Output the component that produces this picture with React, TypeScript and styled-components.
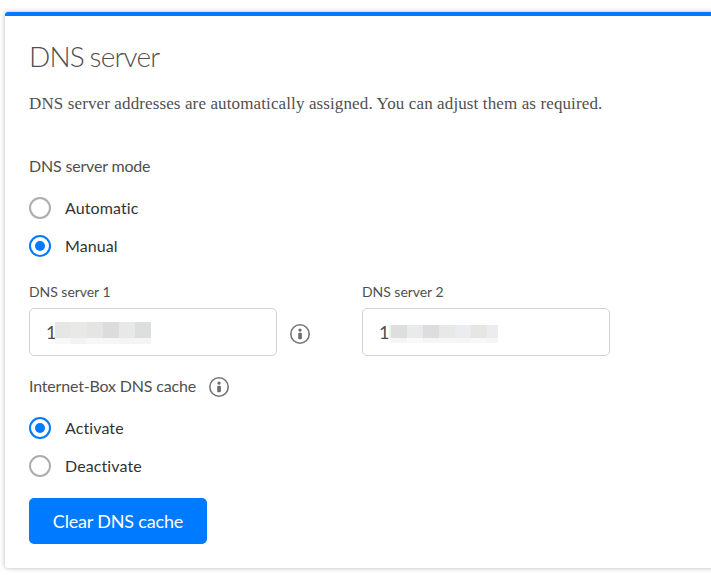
import React, { useState } from "react";
import styled, { createGlobalStyle } from "styled-components";

const GlobalStyle = createGlobalStyle`
  * { box-sizing: border-box; }
  body {
    margin: 0;
    background: #fff;
    color: #4f4f4f;
    font-family: Lato, sans-serif;
    font-variant-ligatures: none;
    overflow: hidden;
  }
`;

const Page = styled.main`
  width: 711px;
  height: 575px;
  padding: 12px 0 0 5px;
  overflow: hidden;
`;

const Card = styled.section`
  width: 730px;
  height: 556px;
  padding: 23px 24px 0;
  border-top: 4px solid #007aff;
  border-radius: 3px;
  background: #fff;
  box-shadow: 0 0 5px rgba(0, 0, 0, 0.28);
`;

const Title = styled.h1`
  margin: 0;
  height: 34px;
  font-size: 28px;
  font-weight: 300;
  line-height: 34px;
  letter-spacing: -0.8px;
  word-spacing: -1.2px;
`;

const Intro = styled.p`
  margin: 19px 0 0;
  height: 24px;
  font-family: "Liberation Serif", serif;
  font-size: 17px;
  line-height: 24px;
  letter-spacing: 0.12px;
  white-space: nowrap;
`;

const GroupLabel = styled.div<{ $top: number }>`
  display: flex;
  align-items: center;
  gap: 12px;
  height: 24px;
  margin-top: ${(p) => p.$top}px;
  font-size: 16px;
  line-height: 24px;
  letter-spacing: -0.18px;
`;

const RadioList = styled.div`
  display: flex;
  flex-direction: column;
  gap: 16px;
  margin-top: 19px;
`;

const RadioLabel = styled.label`
  display: flex;
  align-items: center;
  gap: 14px;
  height: 22px;
  color: #333;
  font-size: 16px;
  line-height: 22px;
  letter-spacing: 0.1px;
`;

const Radio = styled.input`
  appearance: none;
  display: grid;
  place-items: center;
  width: 22px;
  height: 22px;
  margin: 0;
  border: 2px solid #adadad;
  border-radius: 50%;

  &:checked { border-color: #007aff; }
  &:checked::before {
    content: "";
    width: 10px;
    height: 10px;
    border-radius: 50%;
    background: #007aff;
  }
`;

const Fields = styled.div`
  display: grid;
  grid-template-columns: 333px 248px;
  margin-top: 26px;
`;

const FieldLabel = styled.div`
  height: 18px;
  margin-bottom: 7px;
  font-size: 14px;
  line-height: 18px;
  letter-spacing: -0.04px;
`;

const FieldRow = styled.div`
  display: flex;
  align-items: center;
  gap: 12px;
`;

const AddressBox = styled.div`
  display: flex;
  align-items: center;
  width: 248px;
  height: 48px;
  padding-left: 16px;
  border: 1px solid #d1d1d1;
  border-radius: 5px;
  font-size: 18px;
  line-height: 22px;
`;

const Digit = styled.span<{ $width: number }>`
  width: ${(p) => p.$width}px;
`;

const Mosaic = styled.div<{ $columns: string; $rows: string; $shift: number }>`
  display: grid;
  grid-template-columns: ${(p) => p.$columns};
  grid-template-rows: ${(p) => p.$rows};
  margin-top: ${(p) => p.$shift}px;
`;

const Tile = styled.span<{ $color: string }>`
  background: ${(p) => p.$color};
`;

const InfoSvg = styled.svg<{ $drop?: number }>`
  display: block;
  flex: none;
  width: 22px;
  height: 22px;
  margin-top: ${(p) => p.$drop ?? 0}px;
`;

const ClearButton = styled.button`
  display: block;
  width: 178px;
  height: 46px;
  margin-top: 21px;
  padding: 0;
  border: 0;
  border-radius: 5px;
  background: #007aff;
  color: #fff;
  font: 18px/46px Lato, sans-serif;
  letter-spacing: -0.18px;
`;

function InfoIcon({ drop }: { drop?: number }) {
  return (
    <InfoSvg $drop={drop} viewBox="0 0 22 22" role="img" aria-label="Information">
      <circle cx="11" cy="11" r="9.2" fill="none" stroke="#757575" strokeWidth="1.6" />
      <circle cx="11" cy="7.1" r="1.7" fill="#6e6e6e" />
      <rect x="9.2" y="9.8" width="3.7" height="6.5" rx="1" fill="#6e6e6e" />
    </InfoSvg>
  );
}

function RadioGroup({ name, options, initial }: { name: string; options: string[]; initial: string }) {
  const [value, setValue] = useState(initial);
  return (
    <RadioList>
      {options.map((option) => (
        <RadioLabel key={option}>
          <Radio type="radio" name={name} checked={value === option} onChange={() => setValue(option)} />
          {option}
        </RadioLabel>
      ))}
    </RadioList>
  );
}

interface MaskProps {
  columns: string;
  rows: string;
  shift: number;
  colors: string[];
}

const firstMask: MaskProps = {
  columns: "repeat(6, 16px)",
  rows: "16px 6px",
  shift: 2,
  colors: [
    "#e6e6e4", "#e9e9e7", "#e5e5e6", "#dcdcdd", "#e8e8e9", "#dddee0",
    "#f8f8f8", "#f3f3f3", "#f7f7f7", "#f6f6f4", "#f4f4f4", "#f4f5f5",
  ],
};

const secondMask: MaskProps = {
  columns: "2px repeat(6, 16px) 11px",
  rows: "13px 5px",
  shift: 4,
  colors: [
    "#f0f0f1", "#dededf", "#e9eaec", "#dddddf", "#e8e8e8", "#ebecef", "#e6e6e4", "#ececee",
    "#f8f8f8", "#f5f5f5", "#f9f9f9", "#f5f5f5", "#f7f7f7", "#f5f5f5", "#f8f8f8", "#f5f5f5",
  ],
};

function AddressField({ mask, digitWidth }: { mask: MaskProps; digitWidth: number }) {
  return (
    <AddressBox>
      <Digit $width={digitWidth}>1</Digit>
      <Mosaic $columns={mask.columns} $rows={mask.rows} $shift={mask.shift}>
        {mask.colors.map((color, index) => (
          <Tile key={index} $color={color} />
        ))}
      </Mosaic>
    </AddressBox>
  );
}

export default function App() {
  return (
    <>
      <GlobalStyle />
      <Page>
        <Card>
          <Title>DNS server</Title>
          <Intro>DNS server addresses are automatically assigned. You can adjust them as required.</Intro>
          <GroupLabel $top={38}>DNS server mode</GroupLabel>
          <RadioGroup name="mode" options={["Automatic", "Manual"]} initial="Manual" />
          <Fields>
            <div>
              <FieldLabel>DNS server 1</FieldLabel>
              <FieldRow>
                <AddressField mask={firstMask} digitWidth={9} />
                <InfoIcon drop={4} />
              </FieldRow>
            </div>
            <div>
              <FieldLabel>DNS server 2</FieldLabel>
              <AddressField mask={secondMask} digitWidth={10} />
            </div>
          </Fields>
          <GroupLabel $top={18}>
            Internet-Box DNS cache
            <InfoIcon drop={2} />
          </GroupLabel>
          <RadioGroup name="cache" options={["Activate", "Deactivate"]} initial="Activate" />
          <ClearButton type="button">Clear DNS cache</ClearButton>
        </Card>
      </Page>
    </>
  );
}
